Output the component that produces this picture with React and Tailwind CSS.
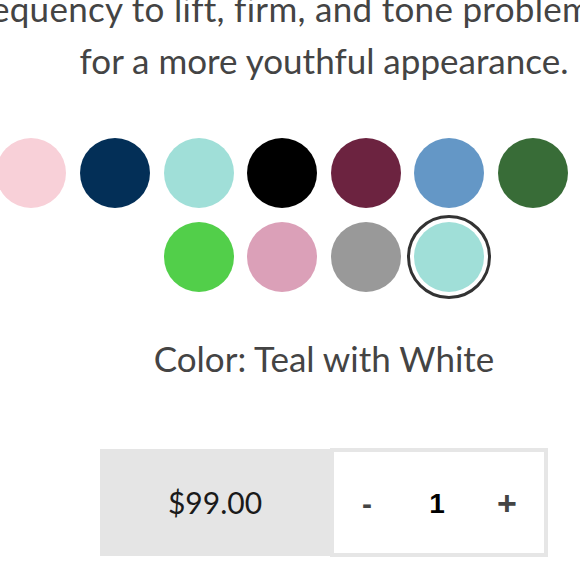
import React from "react";

const swatches = [
  { c: "#f8d0d8" },
  { c: "#032f57" },
  { c: "#a0dfd8" },
  { c: "#000000" },
  { c: "#6c2340" },
  { c: "#6497c6" },
  { c: "#386c37" },
  { c: "#f3e6c8" },
  { c: "#52cf4a" },
  { c: "#dba0b8" },
  { c: "#999999" },
  { c: "#a0dfd8", selected: true },
];

export default function App() {
  return (
    <div
      className="w-[580px] h-[580px] overflow-hidden bg-white"
      style={{ fontFamily: "Lato, 'Open Sans', sans-serif" }}
    >
      <div className="w-[700px] -ml-[26px] flex flex-col items-center text-[#444]">
        <div className="-mt-[18px] self-start -ml-[8px] text-[35px] leading-[52px] tracking-[0.3px] whitespace-nowrap">
          frequency to lift, firm, and tone problems
        </div>
        <div className="text-[35px] leading-[52px] whitespace-nowrap">
          for a more youthful appearance.
        </div>

        <div className="mt-[52px] w-full flex flex-wrap justify-center gap-x-[13.6px] gap-y-[13.5px]">
          {swatches.map((s, i) => (
            <button
              key={i}
              className={
                "w-[70px] h-[70px] rounded-full shrink-0 " +
                (s.selected
                  ? "outline-3 outline-offset-4 outline-[#333333]"
                  : "")
              }
              style={{ backgroundColor: s.c }}
            />
          ))}
        </div>

        <div className="mt-[40px] text-[35px] leading-[52px] whitespace-nowrap">
          Color: Teal with White
        </div>

        <div className="mt-[64px] flex items-center">
          <div className="w-[230px] h-[107px] bg-[#e5e5e5] flex items-center justify-center text-[30px] text-[#1a1a1a]">
            $99.00
          </div>
          <div
            className="w-[218px] h-[109px] border-4 border-[#e6e6e6] bg-white grid grid-cols-3 items-center pt-[3px]"
            style={{ fontFamily: "'Liberation Sans', Arial, sans-serif" }}
          >
            <span className="text-center text-[30px] font-bold text-[#444] -ml-[4px]">-</span>
            <span className="text-center text-[28px] font-bold text-black -ml-[4px]">1</span>
            <span className="text-center text-[34px] font-bold text-[#444] -ml-[4px]">+</span>
          </div>
        </div>
      </div>
    </div>
  );
}
